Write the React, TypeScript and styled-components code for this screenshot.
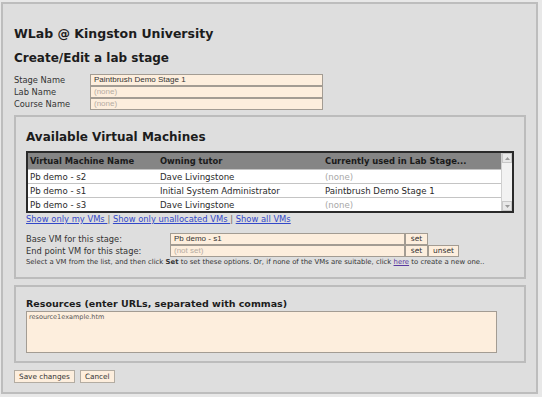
import React from "react";
import styled, { createGlobalStyle } from "styled-components";

const GlobalStyle = createGlobalStyle`
  html, body {
    margin: 0;
    padding: 0;
    background: #e8e8e8;
  }
  body {
    font-family: "DejaVu Sans", Verdana, sans-serif;
    color: #2a2a2a;
  }
`;

const Page = styled.div`
  box-sizing: border-box;
  width: 537px;
  height: 392px;
  margin: 2px 0 0 1px;
  padding: 21px 10px 0 11px;
  border: 2px solid #bdbdbd;
  background: #dedede;
`;

const Title = styled.h1`
  margin: 0;
  font-size: 12.5px;
  line-height: 18px;
  font-weight: bold;
  color: #1c1c1c;
`;

const SubTitle = styled.h2`
  margin: 6px 0 0;
  font-size: 12px;
  line-height: 18px;
  font-weight: bold;
  color: #1c1c1c;
`;

const FieldGrid = styled.div`
  display: grid;
  grid-template-columns: 76px 233px;
  grid-auto-rows: 12px;
  margin-top: 7px;
`;

const Label = styled.div`
  font-size: 8.3px;
  line-height: 12px;
  color: #333;
  white-space: nowrap;
`;

const TextBox = styled.div<{ $empty?: boolean }>`
  box-sizing: border-box;
  height: 12px;
  padding: 0 3px;
  border: 1px solid #a39c93;
  background: #fdeedd;
  font-family: "Liberation Sans", Arial, sans-serif;
  font-size: 8px;
  line-height: 10px;
  color: ${(p) => (p.$empty ? "#b5aca2" : "#333")};
  white-space: nowrap;
  overflow: hidden;
`;

const Panel = styled.div<{ $top: number; $height: number }>`
  box-sizing: border-box;
  margin-top: ${(p) => p.$top}px;
  height: ${(p) => p.$height}px;
  padding: 0 10px;
  border: 2px solid #bcbcbc;
`;

const PanelTitle = styled.h3`
  margin: 11px 0 0;
  font-size: 12px;
  line-height: 18px;
  font-weight: bold;
  color: #1c1c1c;
`;

const SmallTitle = styled.h4`
  margin: 11px 0 0;
  font-size: 9.5px;
  line-height: 12px;
  font-weight: bold;
  color: #1c1c1c;
`;

const TableFrame = styled.div`
  box-sizing: border-box;
  margin-top: 5px;
  width: 488px;
  height: 62px;
  border: 2px solid #2a2a2a;
  display: flex;
  background: #fff;
  overflow: hidden;
`;

const Rows = styled.div`
  flex: 1;
  display: flex;
  flex-direction: column;
`;

const Row = styled.div<{ $head?: boolean }>`
  box-sizing: border-box;
  display: grid;
  grid-template-columns: 130px 165px 1fr;
  height: ${(p) => (p.$head ? 16 : 14)}px;
  align-items: center;
  padding-left: 2px;
  background: ${(p) => (p.$head ? "#858585" : "#fff")};
  border-top: ${(p) => (p.$head ? "0" : "1px solid #c4c4c4")};
  font-size: ${(p) => (p.$head ? 8.4 : 8.6)}px;
  font-weight: ${(p) => (p.$head ? "bold" : "normal")};
  color: ${(p) => (p.$head ? "#1a1a1a" : "#2a2a2a")};
  white-space: nowrap;
`;

const Cell = styled.span<{ $muted?: boolean }>`
  color: ${(p) => (p.$muted ? "#a8a8a8" : "inherit")};
`;

const Scrollbar = styled.div`
  width: 10px;
  display: flex;
  flex-direction: column;
  justify-content: space-between;
  background: #f2f2f2;
  border-left: 1px solid #d0d0d0;
`;

const ScrollArrow = styled.div`
  box-sizing: border-box;
  height: 10px;
  display: flex;
  align-items: center;
  justify-content: center;
  border: 1px solid #c8c8c8;
  background: #e8e8e8;
`;

const LinkRow = styled.div`
  font-size: 8.4px;
  line-height: 12px;
  color: #666;
  white-space: nowrap;
`;

const Link = styled.a`
  color: #3348c8;
  text-decoration: underline;
  cursor: pointer;
`;

const VmGrid = styled.div`
  display: grid;
  grid-template-columns: 144px 235px 23px 31px;
  grid-auto-rows: 12px;
  margin-top: 8px;
`;

const Button = styled.div`
  box-sizing: border-box;
  height: 12px;
  border: 1px solid #a39c93;
  background: #fdeedd;
  font-size: 7.5px;
  line-height: 10px;
  text-align: center;
  color: #333;
`;

const Hint = styled.div`
  margin-top: 1px;
  font-size: 6.9px;
  line-height: 9px;
  color: #333;
  white-space: nowrap;
  b {
    font-weight: bold;
  }
  a {
    color: #5a3aa0;
  }
`;

const TextArea = styled.div`
  box-sizing: border-box;
  width: 471px;
  height: 42px;
  margin-top: 1px;
  padding: 1px 2px;
  border: 1px solid #a39c93;
  background: #fdeedd;
  font-size: 6.5px;
  line-height: 8px;
  color: #555;
`;

const Actions = styled.div`
  display: flex;
  gap: 5px;
  margin-top: 7px;
`;

const FormButton = styled.div`
  box-sizing: border-box;
  height: 13px;
  padding: 0 4px;
  border: 1px solid #b3aca2;
  background: #fdeedd;
  font-size: 7.3px;
  line-height: 11px;
  color: #333;
`;

const Arrow = ({ up }: { up?: boolean }) => (
  <svg width="5" height="3" viewBox="0 0 5 3">
    <path d={up ? "M0 3 L2.5 0 L5 3 Z" : "M0 0 L2.5 3 L5 0 Z"} fill="#9a9a9a" />
  </svg>
);

const vms = [
  { name: "Pb demo - s2", tutor: "Dave Livingstone", stage: "(none)" },
  { name: "Pb demo - s1", tutor: "Initial System Administrator", stage: "Paintbrush Demo Stage 1" },
  { name: "Pb demo - s3", tutor: "Dave Livingstone", stage: "(none)" },
];

export default function App() {
  return (
    <>
      <GlobalStyle />
      <Page>
        <Title>WLab @ Kingston University</Title>
        <SubTitle>Create/Edit a lab stage</SubTitle>

        <FieldGrid>
          <Label>Stage Name</Label>
          <TextBox>Paintbrush Demo Stage 1</TextBox>
          <Label>Lab Name</Label>
          <TextBox $empty>(none)</TextBox>
          <Label>Course Name</Label>
          <TextBox $empty>(none)</TextBox>
        </FieldGrid>

        <Panel $top={5} $height={164}>
          <PanelTitle>Available Virtual Machines</PanelTitle>
          <TableFrame>
            <Rows>
              <Row $head>
                <span>Virtual Machine Name</span>
                <span>Owning tutor</span>
                <span>Currently used in Lab Stage...</span>
              </Row>
              {vms.map((vm) => (
                <Row key={vm.name}>
                  <Cell>{vm.name}</Cell>
                  <Cell>{vm.tutor}</Cell>
                  <Cell $muted={vm.stage === "(none)"}>{vm.stage}</Cell>
                </Row>
              ))}
            </Rows>
            <Scrollbar>
              <ScrollArrow>
                <Arrow up />
              </ScrollArrow>
              <ScrollArrow>
                <Arrow />
              </ScrollArrow>
            </Scrollbar>
          </TableFrame>
          <LinkRow>
            <Link>Show only my VMs </Link> | <Link>Show only unallocated VMs </Link> |{" "}
            <Link>Show all VMs</Link>
          </LinkRow>

          <VmGrid>
            <Label>Base VM for this stage:</Label>
            <TextBox>Pb demo - s1</TextBox>
            <Button>set</Button>
            <span />
            <Label>End point VM for this stage:</Label>
            <TextBox $empty>(not set)</TextBox>
            <Button>set</Button>
            <Button>unset</Button>
          </VmGrid>
          <Hint>
            Select a VM from the list, and then click <b>Set</b> to set these options. Or, if none of the
            VMs are suitable, click <a href="#">here</a> to create a new one..
          </Hint>
        </Panel>

        <Panel $top={6} $height={78}>
          <SmallTitle>Resources (enter URLs, separated with commas)</SmallTitle>
          <TextArea>resource1example.htm</TextArea>
        </Panel>

        <Actions>
          <FormButton>Save changes</FormButton>
          <FormButton>Cancel</FormButton>
        </Actions>
      </Page>
    </>
  );
}
